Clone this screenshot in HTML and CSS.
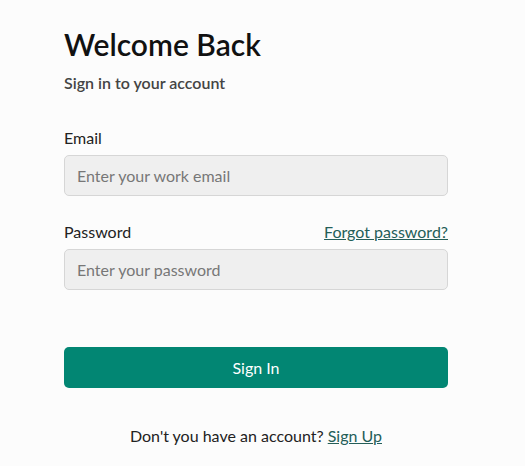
FILE: index.html
```html
<!DOCTYPE html>
<html lang="en">
<head>
  <meta charset="UTF-8" />
  <meta name="viewport" content="width=device-width, initial-scale=1.0" />
  <title>Sign In</title>
  <link rel="stylesheet" href="styles.css">
</head>
<body>
  <div class="login">
    <h1>Welcome Back</h1>
    <p class="subtitle">Sign in to your account</p>

    <form class="form">
      <div class="field">
        <label for="email">Email</label>
        <input type="email" id="email" placeholder="Enter your work email" />
      </div>

      <div class="field">
        <div class="field-head">
          <label for="password">Password</label>
          <a href="#" class="link-dark">Forgot password?</a>
        </div>
        <input type="password" id="password" placeholder="Enter your password" />
      </div>

      <button type="submit" class="btn">Sign In</button>
    </form>

    <p class="signup">Don't you have an account? <a href="#" class="link-dark">Sign Up</a></p>
  </div>
</body>
</html>
```

FILE: styles.css
```css
body {
  margin: 0;
  background: #fcfcfc;
  font-family: Lato, "Open Sans", Arial, sans-serif;
  color: #222;
}

.login {
  width: 384px;
  padding: 26px 0 0 64px;
}

h1 {
  margin: 0;
  font-size: 30px;
  font-weight: 600;
  color: #111;
  line-height: 36px;
}

.subtitle {
  margin: 11px 0 0;
  font-size: 16px;
  font-weight: 600;
  color: #444;
}

.form {
  margin-top: 36px;
}

.field {
  margin-bottom: 26px;
}

.field-head {
  display: flex;
  justify-content: space-between;
  align-items: baseline;
}

label {
  display: block;
  font-size: 16px;
  line-height: 20px;
  margin-bottom: 7px;
}

input {
  width: 100%;
  height: 41px;
  box-sizing: border-box;
  padding: 0 12px;
  border: 1px solid #d6d6d6;
  border-radius: 5px;
  background: #efefef;
  font-family: inherit;
  font-size: 16px;
  color: #222;
}

input::placeholder {
  color: #777;
}

.link-dark {
  color: #245e58;
  font-size: 16px;
}

.btn {
  display: block;
  width: 100%;
  height: 41px;
  margin-top: 57px;
  border: none;
  border-radius: 5px;
  background: #028673;
  color: #fff;
  font-family: inherit;
  font-size: 16px;
  cursor: pointer;
}

.signup {
  margin: 38px 0 0;
  text-align: center;
  font-size: 16px;
}
```
